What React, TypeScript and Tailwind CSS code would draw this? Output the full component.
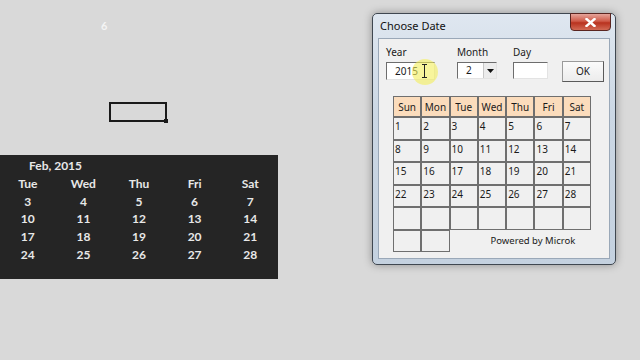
import React from "react";

const headers = ["Sun", "Mon", "Tue", "Wed", "Thu", "Fri", "Sat"];
const dates = Array.from({ length: 28 }, (_, i) => String(i + 1));

const excelRows = [
  ["3", "4", "5", "6", "7"],
  ["10", "11", "12", "13", "14"],
  ["17", "18", "19", "20", "21"],
  ["24", "25", "26", "27", "28"],
];

export default function App() {
  return (
    <div className="w-[640px] h-[360px] bg-[#d9d9d9] flex overflow-hidden" style={{ fontFamily: "Lato, 'Liberation Sans', sans-serif" }}>
      {/* Left: spreadsheet area */}
      <div className="w-[278px] flex flex-col shrink-0">
        <div className="pl-[101px] pt-[18px] h-[102px] text-[11px] font-bold text-[#f4f4f4]">6</div>
        <div className="ml-[109px] w-[58px] h-[20px] border-2 border-[#1a1a1a] relative">
          <div className="absolute -right-[3px] -bottom-[3px] w-[4px] h-[4px] bg-[#1a1a1a]" />
        </div>
        <div className="mt-[33px] h-[124px] bg-[#252525] pt-[2px] text-[#e8e8e8] font-bold text-[12px]">
          <div className="h-[18px] leading-[18px] pl-[29px]">Feb, 2015</div>
          <div className="grid grid-cols-5 h-[17.7px] leading-[17.7px] text-center">
            {["Tue", "Wed", "Thu", "Fri", "Sat"].map((d) => (
              <div key={d}>{d}</div>
            ))}
          </div>
          {excelRows.map((r, i) => (
            <div key={i} className="grid grid-cols-5 h-[17.7px] leading-[17.7px] text-center">
              {r.map((d) => (
                <div key={d}>{d}</div>
              ))}
            </div>
          ))}
        </div>
      </div>

      {/* Right: dialog window */}
      <div className="ml-[94px] mt-[13px] w-[244px] h-[252px] rounded-[5px] border border-[#3f4750] bg-[linear-gradient(180deg,#dfe7f0,#cbd7e4_40%,#c4d1df)] shadow-[0_0_8px_rgba(0,0,0,0.35)] flex flex-col relative" style={{ fontFamily: "'Noto Sans', 'DejaVu Sans', sans-serif" }}>
        {/* title bar */}
        <div className="h-[24px] flex items-center pl-[7px] text-[11px] text-[#111]">Choose Date</div>
        <div className="absolute right-[4px] -top-px w-[41px] h-[18px] rounded-b-[4px] border border-[#5a2520] bg-[linear-gradient(180deg,#e5a49a,#cf5a48_45%,#b8321f_55%,#d26a55)] flex items-center justify-center">
          <svg width="11" height="9" viewBox="0 0 11 9">
            <path d="M1.5 1 L9.5 8 M9.5 1 L1.5 8" stroke="#ffffff" strokeWidth="2.4" strokeLinecap="square" />
          </svg>
        </div>
        {/* client area */}
        <div className="mx-[5px] h-[221px] border border-[#9aa8b8] bg-[#f0f0f0] relative flex flex-col text-[#1a1a1a]">
          {/* fields */}
          <div className="flex pt-[7px] text-[10px] leading-[13px]">
            <div className="ml-[7px] flex flex-col">
              <span>Year</span>
              <div className="mt-[3px] w-[49px] h-[18px] bg-white border-t border-l border-t-[#6d6d6d] border-l-[#6d6d6d] border-b border-r border-b-[#e3e3e3] border-r-[#e3e3e3] text-[10px] leading-[16px] pl-[8px] relative">
                2015
                <div className="absolute left-[25px] top-[-4px] w-[26px] h-[26px] rounded-full bg-[#f4ef5a]/60" />
                <div className="absolute left-[37px] top-[1px] w-[1px] h-[14px] bg-[#222]" />
                <div className="absolute left-[35px] top-[1px] w-[5px] h-[1px] bg-[#222]" />
                <div className="absolute left-[35px] top-[14px] w-[5px] h-[1px] bg-[#222]" />
              </div>
            </div>
            <div className="ml-[22px] flex flex-col">
              <span>Month</span>
              <div className="mt-[3px] w-[40px] h-[17px] bg-white border-t border-l border-t-[#6d6d6d] border-l-[#6d6d6d] border-b border-r border-b-[#e3e3e3] border-r-[#e3e3e3] flex">
                <span className="flex-1 pl-[8px] leading-[15px]">2</span>
                <div className="w-[13px] h-[15px] bg-[#ececec] border-l border-[#c8c8c8] flex items-center justify-center">
                  <svg width="7" height="4" viewBox="0 0 7 4"><path d="M0 0 H7 L3.5 4 Z" fill="#111" /></svg>
                </div>
              </div>
            </div>
            <div className="ml-[16px] flex flex-col">
              <span>Day</span>
              <div className="mt-[3px] w-[35px] h-[17px] bg-white border-t border-l border-t-[#6d6d6d] border-l-[#6d6d6d] border-b border-r border-b-[#e3e3e3] border-r-[#e3e3e3]" />
            </div>
            <div className="ml-[14px] mt-[15px] w-[42px] h-[21px] bg-[linear-gradient(180deg,#fbfbfb,#ececec)] border border-[#9a9a9a] border-r-[#5a5a5a] border-b-[#5a5a5a] flex items-center justify-center text-[10px]">OK</div>
          </div>
          {/* calendar grid */}
          <div className="ml-[14px] mt-[14px] w-[198px] grid grid-cols-7 grid-rows-[21px_repeat(6,22.5px)] text-[10px]">
            {headers.map((h) => (
              <div key={h} className="border border-[#6f6f6f] bg-[#fbdcbc] flex items-center justify-center leading-none">{h}</div>
            ))}
            {dates.map((d) => (
              <div key={d} className="border border-[#6f6f6f] bg-[#f0f0f0] pl-[1px] pt-[2px] leading-[12px]">{d}</div>
            ))}
            {Array.from({ length: 7 }).map((_, i) => (
              <div key={"e" + i} className="border border-[#6f6f6f] bg-[#f0f0f0]" />
            ))}
            <div className="border border-[#6f6f6f] bg-[#f0f0f0]" />
            <div className="border border-[#6f6f6f] bg-[#f0f0f0]" />
            <div className="col-span-5 flex items-center pl-[41px] text-[9.5px]">Powered by Microk</div>
          </div>
        </div>
      </div>
    </div>
  );
}
